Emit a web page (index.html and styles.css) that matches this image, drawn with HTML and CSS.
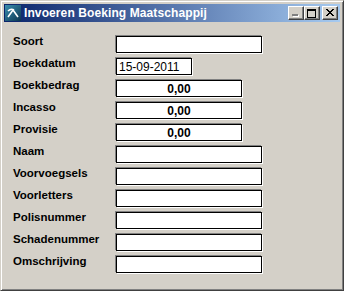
FILE: index.html
```html
<!DOCTYPE html>
<html lang="nl">
<head>
    <meta charset="UTF-8">
    <title>Invoeren Boeking Maatschappij</title>
    <link rel="stylesheet" href="styles.css">
</head>
<body>
    <div class="window">
        <div class="titlebar">
            <svg class="app-icon" width="16" height="16" viewBox="0 0 16 16">
                <defs>
                    <linearGradient id="ig" x1="0" y1="0" x2="1" y2="1">
                        <stop offset="0" stop-color="#3a8fb0"/>
                        <stop offset="1" stop-color="#0c3550"/>
                    </linearGradient>
                </defs>
                <rect width="16" height="16" fill="url(#ig)"/>
                <path d="M3 6 Q6 3 9 5" stroke="#fff" stroke-width="1.6" fill="none"/>
                <path d="M8 5 L3 12 M8 5 L13 12" stroke="#fff" stroke-width="1.6" fill="none"/>
            </svg>
            <span class="title">Invoeren Boeking Maatschappij</span>
            <div class="caption-buttons">
                <div class="cbtn">
                    <svg width="12" height="10" viewBox="0 0 12 10" shape-rendering="crispEdges">
                        <rect x="3" y="7" width="6" height="2" fill="#fff"/>
                        <rect x="2" y="6" width="6" height="2" fill="#808080"/>
                    </svg>
                </div>
                <div class="cbtn">
                    <svg width="12" height="10" viewBox="0 0 12 10" shape-rendering="crispEdges">
                        <rect x="1.5" y="1" width="8" height="8" fill="none" stroke="#000" stroke-width="1"/>
                        <rect x="1" y="0.5" width="9" height="2" fill="#000"/>
                    </svg>
                </div>
                <div class="cbtn close">
                    <svg width="12" height="10" viewBox="0 0 12 10" shape-rendering="crispEdges" fill="#000">
                        <rect x="2" y="1" width="2" height="1"/><rect x="8" y="1" width="2" height="1"/>
                        <rect x="3" y="2" width="2" height="1"/><rect x="7" y="2" width="2" height="1"/>
                        <rect x="4" y="3" width="4" height="1"/>
                        <rect x="5" y="4" width="2" height="1"/>
                        <rect x="4" y="5" width="4" height="1"/>
                        <rect x="3" y="6" width="2" height="1"/><rect x="7" y="6" width="2" height="1"/>
                        <rect x="2" y="7" width="2" height="1"/><rect x="8" y="7" width="2" height="1"/>
                    </svg>
                </div>
            </div>
        </div>

        <form class="form">
            <div class="row"><label>Soort</label><input type="text" class="field wide"></div>
            <div class="row"><label>Boekdatum</label><input type="text" class="field date" value="15-09-2011"></div>
            <div class="row"><label>Boekbedrag</label><input type="text" class="field amount" value="0,00"></div>
            <div class="row"><label>Incasso</label><input type="text" class="field amount" value="0,00"></div>
            <div class="row"><label>Provisie</label><input type="text" class="field amount" value="0,00"></div>
            <div class="row"><label>Naam</label><input type="text" class="field wide"></div>
            <div class="row"><label>Voorvoegsels</label><input type="text" class="field wide"></div>
            <div class="row"><label>Voorletters</label><input type="text" class="field wide"></div>
            <div class="row"><label>Polisnummer</label><input type="text" class="field wide"></div>
            <div class="row"><label>Schadenummer</label><input type="text" class="field wide"></div>
            <div class="row"><label>Omschrijving</label><input type="text" class="field wide"></div>
        </form>
    </div>
</body>
</html>
```

FILE: styles.css
```css
* {
    box-sizing: border-box;
}

body {
    margin: 0;
    padding: 0;
    background: #d4d0c8;
    font-family: 'Liberation Sans', Arial, sans-serif;
}

.window {
    width: 344px;
    height: 291px;
    background: #d4d0c8;
    border: 1px solid;
    border-color: #d4d0c8 #404040 #404040 #d4d0c8;
    box-shadow: inset 1px 1px 0 #fff, inset -1px -1px 0 #808080;
    padding: 3px;
}

.titlebar {
    height: 18px;
    display: flex;
    align-items: center;
    padding: 0 2px 0 1px;
    background: linear-gradient(to right, #0a246a, #a6caf0);
}

.app-icon {
    flex: none;
}

.title {
    margin-left: 3px;
    color: #fff;
    font-weight: bold;
    font-size: 12px;
    letter-spacing: 0.1px;
    flex: 1;
    white-space: nowrap;
}

.caption-buttons {
    display: flex;
}

.cbtn {
    width: 16px;
    height: 14px;
    background: #d4d0c8;
    border: 1px solid;
    border-color: #fff #404040 #404040 #fff;
    box-shadow: inset -1px -1px 0 #808080;
    display: flex;
    align-items: center;
    justify-content: center;
}

.cbtn.close {
    margin-left: 2px;
}

.form {
    margin: 0;
    padding: 13px 0 0 9px;
}

.row {
    display: flex;
    align-items: flex-start;
    height: 22px;
}

label {
    width: 103px;
    flex: none;
    font-weight: bold;
    font-size: 11.5px;
    line-height: 13px;
    color: #000;
}

.field {
    margin-top: 1px;
    height: 17px;
    border: 1px solid #000;
    box-shadow: -1px -1px 0 #808080, 1px 1px 0 #fff;
    background: #fff;
    padding: 0 2px;
    font-family: 'Liberation Sans', Arial, sans-serif;
    font-size: 12px;
    color: #000;
    outline: none;
}

.wide {
    width: 146px;
}

.date {
    width: 76px;
}

.amount {
    width: 126px;
    text-align: center;
    font-weight: bold;
}
```
